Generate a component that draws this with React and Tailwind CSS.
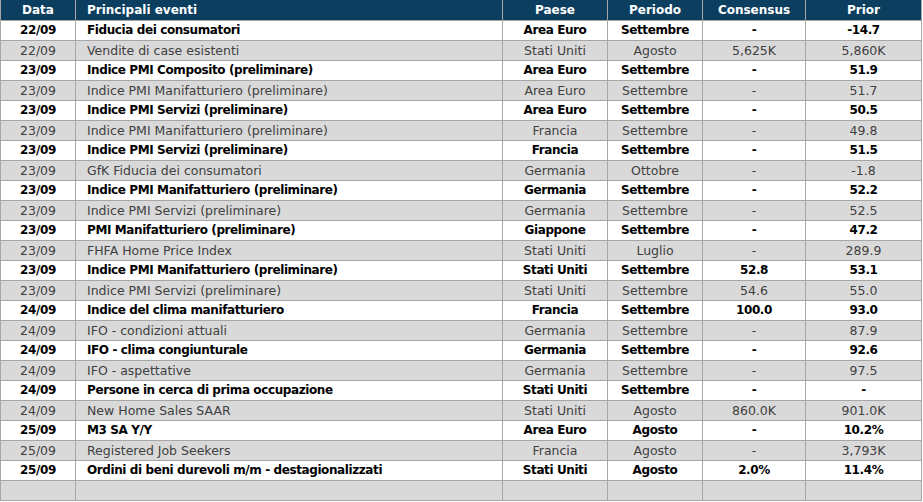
import React from "react";

const rows = [
  ["22/09", "Fiducia dei consumatori", "Area Euro", "Settembre", "-", "-14.7", true],
  ["22/09", "Vendite di case esistenti", "Stati Uniti", "Agosto", "5,625K", "5,860K", false],
  ["23/09", "Indice PMI Composito (preliminare)", "Area Euro", "Settembre", "-", "51.9", true],
  ["23/09", "Indice PMI Manifatturiero (preliminare)", "Area Euro", "Settembre", "-", "51.7", false],
  ["23/09", "Indice PMI Servizi (preliminare)", "Area Euro", "Settembre", "-", "50.5", true],
  ["23/09", "Indice PMI Manifatturiero (preliminare)", "Francia", "Settembre", "-", "49.8", false],
  ["23/09", "Indice PMI Servizi (preliminare)", "Francia", "Settembre", "-", "51.5", true],
  ["23/09", "GfK Fiducia dei consumatori", "Germania", "Ottobre", "-", "-1.8", false],
  ["23/09", "Indice PMI Manifatturiero (preliminare)", "Germania", "Settembre", "-", "52.2", true],
  ["23/09", "Indice PMI Servizi (preliminare)", "Germania", "Settembre", "-", "52.5", false],
  ["23/09", "PMI Manifatturiero (preliminare)", "Giappone", "Settembre", "-", "47.2", true],
  ["23/09", "FHFA Home Price Index", "Stati Uniti", "Luglio", "-", "289.9", false],
  ["23/09", "Indice PMI Manifatturiero (preliminare)", "Stati Uniti", "Settembre", "52.8", "53.1", true],
  ["23/09", "Indice PMI Servizi (preliminare)", "Stati Uniti", "Settembre", "54.6", "55.0", false],
  ["24/09", "Indice del clima manifatturiero", "Francia", "Settembre", "100.0", "93.0", true],
  ["24/09", "IFO - condizioni attuali", "Germania", "Settembre", "-", "87.9", false],
  ["24/09", "IFO - clima congiunturale", "Germania", "Settembre", "-", "92.6", true],
  ["24/09", "IFO - aspettative", "Germania", "Settembre", "-", "97.5", false],
  ["24/09", "Persone in cerca di prima occupazione", "Stati Uniti", "Settembre", "-", "-", true],
  ["24/09", "New Home Sales SAAR", "Stati Uniti", "Agosto", "860.0K", "901.0K", false],
  ["25/09", "M3 SA Y/Y", "Area Euro", "Agosto", "-", "10.2%", true],
  ["25/09", "Registered Job Seekers", "Francia", "Agosto", "-", "3,793K", false],
  ["25/09", "Ordini di beni durevoli m/m - destagionalizzati", "Stati Uniti", "Agosto", "2.0%", "11.4%", true],
  ["", "", "", "", "", "", false],
];

const cols = "grid grid-cols-[75px_427px_105px_95px_103px_116px]";

export default function App() {
  return (
    <div className="w-[923px] h-[502px] bg-white font-['DejaVu_Sans',sans-serif]">
      <div className="border-l border-[#a6a6a6] w-[922px]">
        {/* header */}
        <div className={`${cols} h-[21px] bg-[#0c3e5f] text-white font-bold text-[12px] leading-[20px] border-b border-[#a6a6a6]`}>
          <div className="text-center border-r border-[#a6a6a6]">Data</div>
          <div className="pl-[11px] border-r border-[#a6a6a6]">Principali eventi</div>
          <div className="text-center border-r border-[#a6a6a6]">Paese</div>
          <div className="text-center border-r border-[#a6a6a6]">Periodo</div>
          <div className="text-center border-r border-[#a6a6a6]">Consensus</div>
          <div className="text-center border-r border-[#a6a6a6]">Prior</div>
        </div>
        {rows.map((r, i) => (
          <div
            key={i}
            className={`${cols} h-[20px] leading-[19px] border-b border-[#a6a6a6] ${
              r[6]
                ? "bg-white text-black font-bold text-[12px] tracking-[-0.4px]"
                : "bg-[#d9d9d9] text-[#404040] text-[12.5px]"
            }`}
          >
            <div className="text-center border-r border-[#a6a6a6]">{r[0]}</div>
            <div className="pl-[11px] border-r border-[#a6a6a6] whitespace-nowrap overflow-hidden">{r[1]}</div>
            <div className="text-center border-r border-[#a6a6a6]">{r[2]}</div>
            <div className="text-center border-r border-[#a6a6a6]">{r[3]}</div>
            <div className="text-center border-r border-[#a6a6a6]">{r[4]}</div>
            <div className="text-center border-r border-[#a6a6a6]">{r[5]}</div>
          </div>
        ))}
      </div>
    </div>
  );
}
